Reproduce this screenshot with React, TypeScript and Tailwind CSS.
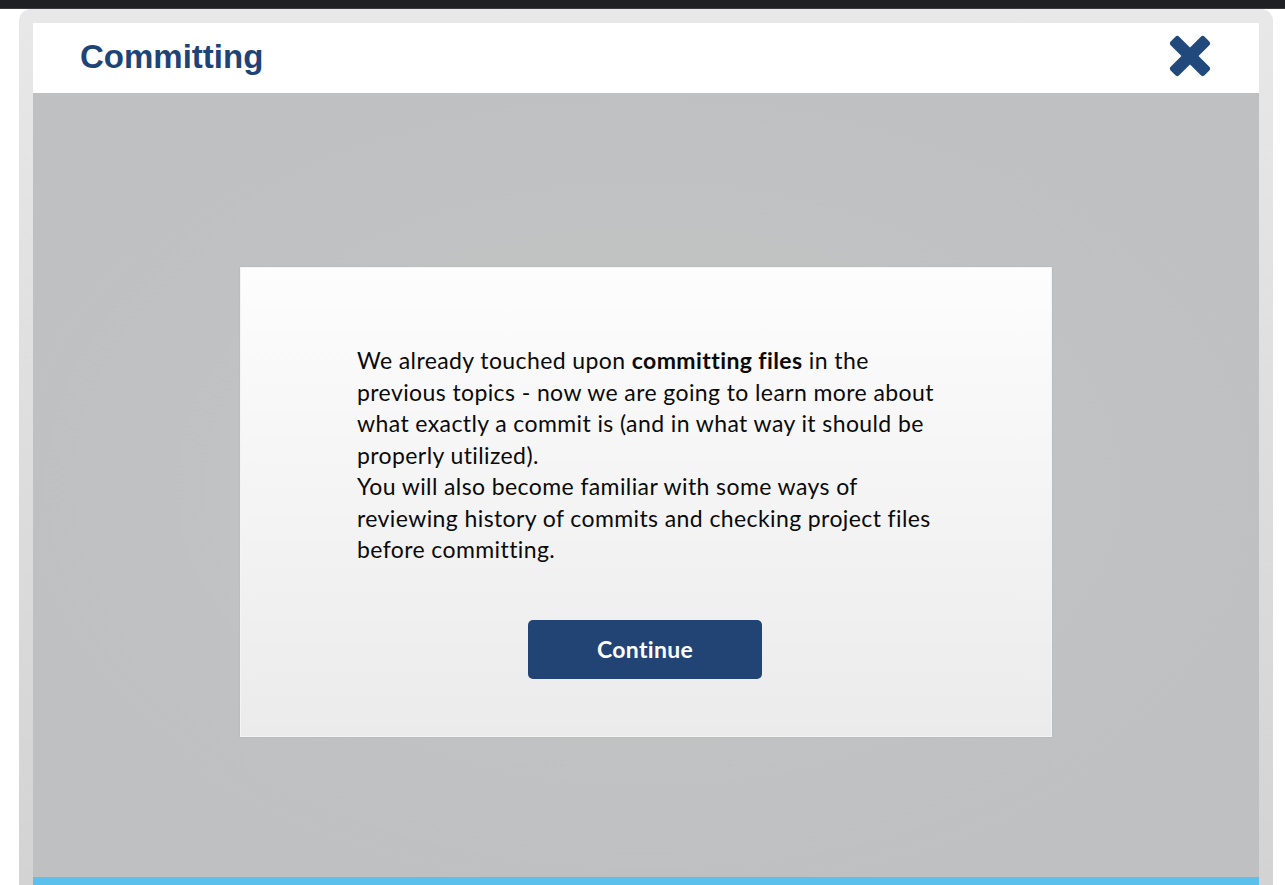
import React from "react";

export default function App() {
  return (
    <div className="w-full h-[885px] bg-white overflow-hidden flex flex-col">
      <div className="h-[9px] bg-[#1f2023] border-b border-[#3a3b3e] shrink-0" />
      <div className="flex-1 flex pl-[19px] pr-[12px] min-h-0">
        <div className="flex-1 flex flex-col rounded-t-[12px] bg-gradient-to-b from-[#e8e8e8] to-[#d3d3d3] pt-[14px] px-[14px] min-h-0">
          <div className="h-[70px] bg-white flex items-center justify-between pl-[47px] pr-[47px] shrink-0">
            <h1
              className="text-[33px] font-bold text-[#1e4477] leading-none mt-[-4px]"
              style={{ fontFamily: '"Liberation Sans", Arial, sans-serif' }}
            >
              Committing
            </h1>
            <svg width="44" height="44" viewBox="0 0 44 44" className="mt-[-5px]">
              <g fill="#21497c">
                <rect x="-2" y="16" width="48" height="12" rx="3" transform="rotate(45 22 22)" />
                <rect x="-2" y="16" width="48" height="12" rx="3" transform="rotate(-45 22 22)" />
              </g>
            </svg>
          </div>
          <div className="flex-1 flex flex-col min-h-0">
            <div className="flex-1 flex justify-center pt-[174px] bg-[radial-gradient(ellipse_at_center,#c4c5c4_0%,#c1c2c2_45%,#bfc0c2_75%)]">
              <div
                className="w-[812px] h-[470px] bg-gradient-to-b from-[#fdfdfd] to-[#ebebeb] border border-[#f4f4f4] shadow-[0_0_2px_rgba(0,0,0,0.08)] flex flex-col items-center pt-[77px]"
                style={{ fontFamily: 'Lato, "Noto Sans", sans-serif' }}
              >
                <div className="w-[578px] text-[23px] tracking-[0.4px] leading-[31.5px] text-[#0a0a0a] whitespace-nowrap">
                  <div>
                    We already touched upon <b className="font-bold">committing files</b> in the
                  </div>
                  <div>previous topics - now we are going to learn more about</div>
                  <div>what exactly a commit is (and in what way it should be</div>
                  <div>properly utilized).</div>
                  <div>You will also become familiar with some ways of</div>
                  <div>reviewing history of commits and checking project files</div>
                  <div>before committing.</div>
                </div>
                <button className="mt-[54px] ml-[-2px] w-[234px] h-[59px] rounded-[5px] bg-[#214475] text-white text-[23px] tracking-[0.3px] font-bold flex items-center justify-center">
                  Continue
                </button>
              </div>
            </div>
            <div className="h-[8px] bg-[#5bc0eb] shrink-0" />
          </div>
        </div>
      </div>
    </div>
  );
}
